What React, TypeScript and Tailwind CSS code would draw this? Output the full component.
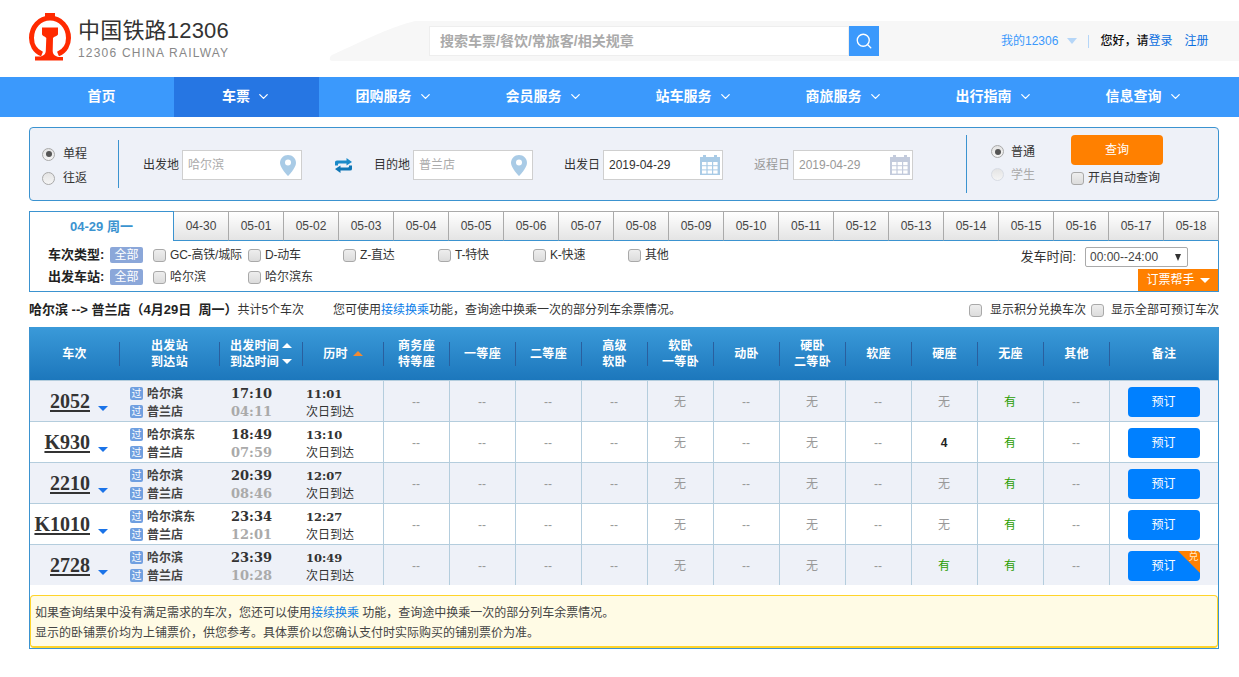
import { ChevronDown, Search } from 'lucide-react';

const navItems = [
  { label: '首页', width: 'w-[145px]' },
  { label: '车票', width: 'w-[145px]', arrow: true, active: true },
  { label: '团购服务', width: 'w-[150px]', arrow: true },
  { label: '会员服务', width: 'w-[150px]', arrow: true },
  { label: '站车服务', width: 'w-[150px]', arrow: true },
  { label: '商旅服务', width: 'w-[150px]', arrow: true },
  { label: '出行指南', width: 'w-[150px]', arrow: true },
  { label: '信息查询', width: 'w-[150px]', arrow: true },
];

const dates = [
  '04-30', '05-01', '05-02', '05-03', '05-04', '05-05', '05-06', '05-07', '05-08', '05-09',
  '05-10', '05-11', '05-12', '05-13', '05-14', '05-15', '05-16', '05-17', '05-18',
];

const trainTypes = ['GC-高铁/城际', 'D-动车', 'Z-直达', 'T-特快', 'K-快速', '其他'];

const trains = [
  { no: '2052', from: '哈尔滨', start: '17:10', end: '04:11', dur: '11:01', hard: '无', none: '有' },
  { no: 'K930', from: '哈尔滨东', start: '18:49', end: '07:59', dur: '13:10', hard: '4', none: '有' },
  { no: '2210', from: '哈尔滨', start: '20:39', end: '08:46', dur: '12:07', hard: '无', none: '有' },
  { no: 'K1010', from: '哈尔滨东', start: '23:34', end: '12:01', dur: '12:27', hard: '无', none: '有' },
  { no: '2728', from: '哈尔滨', start: '23:39', end: '10:28', dur: '10:49', hard: '有', none: '有', points: true },
];

const seatHeaders = [
  ['商务座', '特等座'], ['一等座'], ['二等座'], ['高级', '软卧'], ['软卧', '一等卧'], ['动卧'],
  ['硬卧', '二等卧'], ['软座'], ['硬座'], ['无座'], ['其他'],
];

const gridCols = 'grid grid-cols-[89px_100px_83px_81px_repeat(11,66px)_109px]';

function Logo() {
  return (
    <svg width="42" height="48" viewBox="0 0 42 48" className="shrink-0">
      <path d="M16 0h10v5h-10z" fill="#ff2a00" />
      <path
        d="M13 41C5.500 38 2.500 31 2.500 25 2.500 14 10.500 5 21 5s18.500 9 18.500 20c0 6-3 13-10.500 16"
        fill="none"
        stroke="#ff2a00"
        strokeWidth="5"
      />
      <path
        d="M13 14.500h16v6.500c0 2-4 2.500-5 4l-.3 13c0 4 3.300 5 5.300 6h5v3.500H6V43.500h6c2-1 4.800-2 4.800-6l.5-12.500c-1-1.500-4.300-2-4.300-4z"
        fill="#ff2a00"
      />
    </svg>
  );
}

function Pin() {
  return (
    <svg width="16" height="21" viewBox="0 0 16 21" className="mr-[3px] shrink-0">
      <path d="M8 0C3.600 0 0 3.500 0 7.900 0 12.800 8 21 8 21s8-8.200 8-13.100C16 3.500 12.400 0 8 0z" fill="#a9cbe6" />
      <circle cx="8" cy="7.500" r="3" fill="#fff" />
    </svg>
  );
}

function Calendar({ color }: { color: string }) {
  const cells = [0, 1, 2];
  return (
    <svg width="20" height="20" viewBox="0 0 20 20" className="shrink-0">
      <rect x="0" y="2" width="20" height="18" fill={color} />
      <rect x="3" y="0" width="3" height="4" fill={color} />
      <rect x="14" y="0" width="3" height="4" fill={color} />
      {cells.map((r) =>
        cells.map((c) => (
          <rect key={`${r}-${c}`} x={2 + c * 5.600} y={7 + r * 4.200} width="4.400" height="3.200" fill="#fff" />
        )),
      )}
    </svg>
  );
}

function SwapIcon() {
  return (
    <svg width="17" height="15" viewBox="0 0 17 15">
      <path d="M0 7.500V4Q0 2.500 2 2.500H11.500V0L17 4L11.500 7.500V5.500H4Q3 5.500 3 6.500V7.500Z" fill="#1a8ac9" />
      <path d="M17 7.500V11Q17 12.500 15 12.500H5.500V15L0 11L5.500 7.500V9.500H13Q14 9.500 14 8.500V7.500Z" fill="#0f76b5" />
    </svg>
  );
}

function Radio({ checked, faded }: { checked?: boolean; faded?: boolean }) {
  return (
    <span
      className={`flex h-[13px] w-[13px] shrink-0 items-center justify-center rounded-full border bg-gradient-to-b from-[#e4e4e4] to-[#f5f5f5] ${
        faded ? 'border-[#d8dce4]' : 'border-[#a9a9a9]'
      }`}
    >
      {checked && <span className="h-[6px] w-[6px] rounded-full bg-[#555]" />}
    </span>
  );
}

function Checkbox() {
  return (
    <span className="block h-[13px] w-[13px] shrink-0 rounded-[3px] border border-[#a9a9a9] bg-gradient-to-b from-[#eeeeee] to-[#dcdcdc]" />
  );
}

function SortArrow({ down, orange }: { down?: boolean; orange?: boolean }) {
  const color = orange ? 'border-b-[#f08a33]' : 'border-b-white';
  return down ? (
    <span className="h-0 w-0 border-x-[5px] border-t-[5px] border-x-transparent border-t-white" />
  ) : (
    <span className={`h-0 w-0 border-x-[5px] border-b-[5px] border-x-transparent ${color}`} />
  );
}

function Field({ label, value, muted, placeholder, icon }: { label: string; value: string; muted?: boolean; placeholder?: boolean; icon: React.ReactNode }) {
  return (
    <div className={`mt-[2px] flex items-center gap-[2px] ${muted ? 'text-[#999]' : 'text-[#333]'}`}>
      <span className="w-[37px] whitespace-nowrap">{label}</span>
      <div className="flex h-[30px] w-[120px] items-center justify-between border border-[#cfcfcf] bg-white pl-[5px] pr-[2px]">
        <span className={placeholder ? 'text-[#aaa]' : ''}>{value}</span>
        {icon}
      </div>
    </div>
  );
}

function Seat({ value }: { value: string }) {
  let color = 'text-[#999]';
  if (value === '有') color = 'text-[#2a9d00]';
  if (value === '4') color = 'font-bold text-[#222]';
  return (
    <div className={`flex items-center justify-center border-l border-[#b4cddd] pr-[1px] pt-[2px] ${color}`}>{value}</div>
  );
}

function Stop({ name }: { name: string }) {
  return (
    <div className="flex h-[18px] items-center gap-[4px]">
      <span className="flex h-[13px] w-[13px] items-center justify-center rounded-[2px] bg-[#6f9fe0] text-[10px] leading-none text-white">
        过
      </span>
      <span className="font-bold text-[#444]">{name}</span>
    </div>
  );
}

function HeaderCell({ children, first }: { children: React.ReactNode; first?: boolean }) {
  return (
    <div className="flex items-center">
      {!first && <span className="h-[24px] w-px shrink-0 bg-[#2a5f9e]" />}
      <div className="flex flex-1 flex-col items-center justify-center text-center">{children}</div>
    </div>
  );
}

export default function App() {
  return (
    <div className="min-h-screen bg-white font-['Liberation_Sans','Noto_Sans_CJK_SC',sans-serif] text-[12px] text-[#333]">
      {/* Header */}
      <header className="flex h-[77px]">
        <div className="flex w-[329px] shrink-0 items-start gap-[7px] pl-[29px] pt-[13px]">
          <Logo />
          <div className="pt-[5px]">
            <div className="text-[22px] leading-[26px] tracking-[0.2px] text-[#333]">中国铁路12306</div>
            <div className="mt-[2px] text-[12px] leading-[14px] tracking-[1.2px] text-[#888]">12306 CHINA RAILWAY</div>
          </div>
        </div>
        <div className="mt-[21px] flex h-[40px] flex-1">
          <svg width="100" height="40" viewBox="0 0 100 40" className="shrink-0">
            <path d="M100 0H86C60 6 30 22 3 34c-3 2-3 6 0 6h97z" fill="#f7f7f7" />
          </svg>
          <div className="flex flex-1 items-center bg-[#f7f7f7]">
            <div className="flex h-[30px] w-[420px] items-center border border-[#eeeeee] bg-white pl-[10px] text-[14px] font-bold text-[#aaa]">
              搜索车票/餐饮/常旅客/相关规章
            </div>
            <div className="flex h-[30px] w-[30px] items-center justify-center bg-[#3b99fc]">
              <Search size={18} color="#fff" strokeWidth={1.8} />
            </div>
            <div className="ml-[122px] flex items-center text-[#3b99fc]">
              <span>我的12306</span>
              <span className="ml-[9px] h-0 w-0 border-x-[5px] border-t-[6px] border-x-transparent border-t-[#b5d6f8]" />
              <span className="ml-[11px] h-[13px] w-px bg-[#b5d6f8]" />
              <span className="ml-[11px] font-medium text-[#111]">您好，请</span>
              <span className="text-[#0b6fe0]">登录</span>
              <span className="ml-[12px] text-[#0b6fe0]">注册</span>
            </div>
          </div>
        </div>
      </header>

      {/* Nav */}
      <nav className="flex h-[40px] bg-[#3b99fc] pb-[2px] pl-[29px] text-[14px] font-bold text-white">
        {navItems.map((item) => (
          <div
            key={item.label}
            className={`-mb-[2px] flex items-center justify-center gap-[6px] pb-[2px] ${item.width} ${item.active ? 'bg-[#2676e3]' : ''}`}
          >
            <span>{item.label}</span>
            {item.arrow && <ChevronDown size={15} strokeWidth={2} />}
          </div>
        ))}
      </nav>

      <main className="mx-[29px] w-[1190px] pt-[10px]">
        {/* Search panel */}
        <section className="flex h-[74px] items-center rounded-[4px] border border-[#3b93d0] bg-[#eef1f8] pl-[12px]">
          <div className="mt-[4px] flex w-[76px] flex-col gap-[9px]">
            <label className="flex h-[15px] items-center gap-[8px]"><Radio checked />单程</label>
            <label className="flex h-[15px] items-center gap-[8px]"><Radio />往返</label>
          </div>
          <div className="h-[48px] w-px bg-[#3b93d0]" />
          <div className="ml-[24px]">
            <Field label="出发地" value="哈尔滨" placeholder icon={<Pin />} />
          </div>
          <div className="ml-[33px] mt-[2px] flex w-[17px] justify-center"><SwapIcon /></div>
          <div className="ml-[22px]">
            <Field label="目的地" value="普兰店" placeholder icon={<Pin />} />
          </div>
          <div className="ml-[31px]">
            <Field label="出发日" value="2019-04-29" icon={<Calendar color="#a9cbe6" />} />
          </div>
          <div className="ml-[31px]">
            <Field label="返程日" value="2019-04-29" muted icon={<Calendar color="#c3cbdc" />} />
          </div>
          <div className="ml-[53px] h-[58px] w-px bg-[#3b93d0]" />
          <div className="mb-[2px] ml-[24px] flex w-[80px] flex-col gap-[8px]">
            <label className="flex h-[15px] items-center gap-[7px]"><Radio checked />普通</label>
            <label className="flex h-[15px] items-center gap-[7px] text-[#aaa]"><Radio faded />学生</label>
          </div>
          <div className="mb-[1px] flex flex-col gap-[6px] self-start pt-[7px]">
            <div className="flex h-[30px] w-[92px] items-center justify-center rounded-[4px] bg-[#ff8000] text-white">查询</div>
            <label className="flex h-[14px] items-center gap-[4px]"><Checkbox />开启自动查询</label>
          </div>
        </section>

        {/* Date tabs */}
        <div className="mt-[10px] flex h-[30px]">
          <div className="flex w-[145px] items-center justify-center border-l border-r border-t border-[#3b93d0] bg-white text-[13px] font-bold text-[#3b93d0]">
            04-29 周一
          </div>
          {dates.map((d) => (
            <div
              key={d}
              className="flex w-[55px] items-center justify-center border-b border-r border-t border-b-[#3b93d0] border-r-[#aaa] border-t-[#aaa] bg-gradient-to-b from-white to-[#e4e4e4] text-[#444]"
            >
              {d}
            </div>
          ))}
        </div>

        {/* Filters */}
        <section className="flex h-[51px] justify-between border-x border-b border-[#3b93d0] pl-[18px]">
          <div className="flex flex-col gap-[6px] pt-[6px]">
            <div className="flex h-[16px] items-center">
              <span className="w-[62px] text-[13px] font-bold text-[#222]">车次类型:</span>
              <span className="flex h-[16px] w-[33px] items-center justify-center rounded-[2px] bg-[#8ba7d9] text-white">全部</span>
              <div className="ml-[10px] flex">
                {trainTypes.map((t) => (
                  <label key={t} className="flex w-[95px] items-center gap-[4px] whitespace-nowrap tracking-[-0.2px]">
                    <Checkbox />
                    {t}
                  </label>
                ))}
              </div>
            </div>
            <div className="flex h-[16px] items-center">
              <span className="w-[62px] text-[13px] font-bold text-[#222]">出发车站:</span>
              <span className="flex h-[16px] w-[33px] items-center justify-center rounded-[2px] bg-[#8ba7d9] text-white">全部</span>
              <div className="ml-[10px] flex">
                {['哈尔滨', '哈尔滨东'].map((t) => (
                  <label key={t} className="flex w-[95px] items-center gap-[4px]">
                    <Checkbox />
                    {t}
                  </label>
                ))}
              </div>
            </div>
          </div>
          <div className="flex flex-col items-end justify-between pt-[6px]">
            <div className="mr-[30px] flex items-center gap-[9px]">
              <span className="text-[13px]">发车时间:</span>
              <div className="flex h-[20px] w-[103px] items-center justify-between rounded-[2px] border border-[#aaa] pl-[4px] pr-[6px] text-[#444]">
                <span>00:00--24:00</span>
                <span className="h-0 w-0 border-x-[3.500px] border-t-[7px] border-x-transparent border-t-[#333]" />
              </div>
            </div>
            <div className="flex h-[22px] w-[80px] items-center justify-center gap-[5px] bg-[#ff8000] text-white">
              订票帮手
              <span className="h-0 w-0 border-x-[5px] border-t-[5px] border-x-transparent border-t-white" />
            </div>
          </div>
        </section>

        {/* Summary */}
        <div className="flex h-[35px] items-center pt-[1px]">
          <span className="w-[304px] whitespace-nowrap">
            <b className="text-[13px] text-[#222]">哈尔滨 --&gt; 普兰店（4月29日&nbsp; 周一）</b>共计5个车次
          </span>
          <span>
            您可使用<span className="text-[#0b7de8]">接续换乘</span>功能，查询途中换乘一次的部分列车余票情况。
          </span>
          <div className="ml-auto flex items-center">
            <Checkbox />
            <span className="ml-[8px]">显示积分兑换车次</span>
            <span className="ml-[5px]"><Checkbox /></span>
            <span className="ml-[7px]">显示全部可预订车次</span>
          </div>
        </div>

        {/* Results */}
        <section className="border-x border-b border-[#3b93d0]">
          <div className={`${gridCols} h-[54px] border-b border-[#b4cddd] bg-gradient-to-b from-[#3a9ad9] to-[#1c77bc] font-bold leading-[16px] tracking-[0.3px] text-white`}>
            <HeaderCell first>车次</HeaderCell>
            <HeaderCell>出发站<br />到达站</HeaderCell>
            <HeaderCell>
              <div className="flex items-center gap-[3px]"><span>出发时间</span><SortArrow /></div>
              <div className="flex items-center gap-[3px]"><span>到达时间</span><SortArrow down /></div>
            </HeaderCell>
            <HeaderCell>
              <div className="flex items-center gap-[5px]"><span>历时</span><SortArrow orange /></div>
            </HeaderCell>
            {seatHeaders.map((lines) => (
              <HeaderCell key={lines.join()}>
                {lines.map((l) => <div key={l}>{l}</div>)}
              </HeaderCell>
            ))}
            <HeaderCell>备注</HeaderCell>
          </div>

          {trains.map((t, i) => (
            <div
              key={t.no}
              className={`${gridCols} ${i === trains.length - 1 ? 'h-[40px]' : 'h-[41px] border-b border-[#b4cddd]'} ${i % 2 === 0 ? 'bg-[#eef1f8]' : 'bg-white'}`}
            >
              <div className="flex items-center justify-end pr-[11px]">
                <span className="font-['Liberation_Serif',serif] text-[20px] font-bold leading-none text-[#333] underline underline-offset-2">{t.no}</span>
                <span className="ml-[8px] mt-[14px] h-0 w-0 border-x-[5px] border-t-[5px] border-x-transparent border-t-[#1a73e8]" />
              </div>
              <div className="flex flex-col justify-center pl-[11px] pt-[3px]">
                <Stop name={t.from} />
                <Stop name="普兰店" />
              </div>
              <div className="flex flex-col justify-center pl-[12px] pt-[3px] font-['DejaVu_Serif',serif] text-[13px] font-bold leading-[18px]">
                <span className="text-[#333]">{t.start}</span>
                <span className="text-[#aaa]">{t.end}</span>
              </div>
              <div className="flex flex-col justify-center pl-[4px] pt-[3px] leading-[18px]">
                <span className="font-['DejaVu_Serif',serif] text-[11.500px] font-bold text-[#333]">{t.dur}</span>
                <span>次日到达</span>
              </div>
              {['--', '--', '--', '--', '无', '--', '无', '--', t.hard, t.none, '--'].map((v, idx) => (
                <Seat key={idx} value={v} />
              ))}
              <div className="flex items-center justify-center border-l border-[#b4cddd] pr-[1px] pt-[1px]">
                <div className="relative flex h-[30px] w-[72px] items-center justify-center overflow-hidden rounded-[4px] bg-[#0080ff] text-white">
                  预订
                  {t.points && (
                    <>
                      <span className="absolute right-0 top-0 h-0 w-0 border-l-[22px] border-t-[22px] border-l-transparent border-t-[#ff8000]" />
                      <span className="absolute right-[1px] top-[1px] text-[10px] leading-none text-[#ffe9c9]">兑</span>
                    </>
                  )}
                </div>
              </div>
            </div>
          ))}

          {/* Note */}
          <div className="mt-[10px] h-[53px] rounded-[4px] border border-b-2 border-[#ffd42a] bg-[#fffbe5] px-[4px] py-[7px] leading-[20px] text-[#444]">
            <div>
              如果查询结果中没有满足需求的车次，您还可以使用<span className="text-[#0b7de8]">接续换乘</span> 功能，查询途中换乘一次的部分列车余票情况。
            </div>
            <div>显示的卧铺票价均为上铺票价，供您参考。具体票价以您确认支付时实际购买的铺别票价为准。</div>
          </div>
        </section>
      </main>
    </div>
  );
}
